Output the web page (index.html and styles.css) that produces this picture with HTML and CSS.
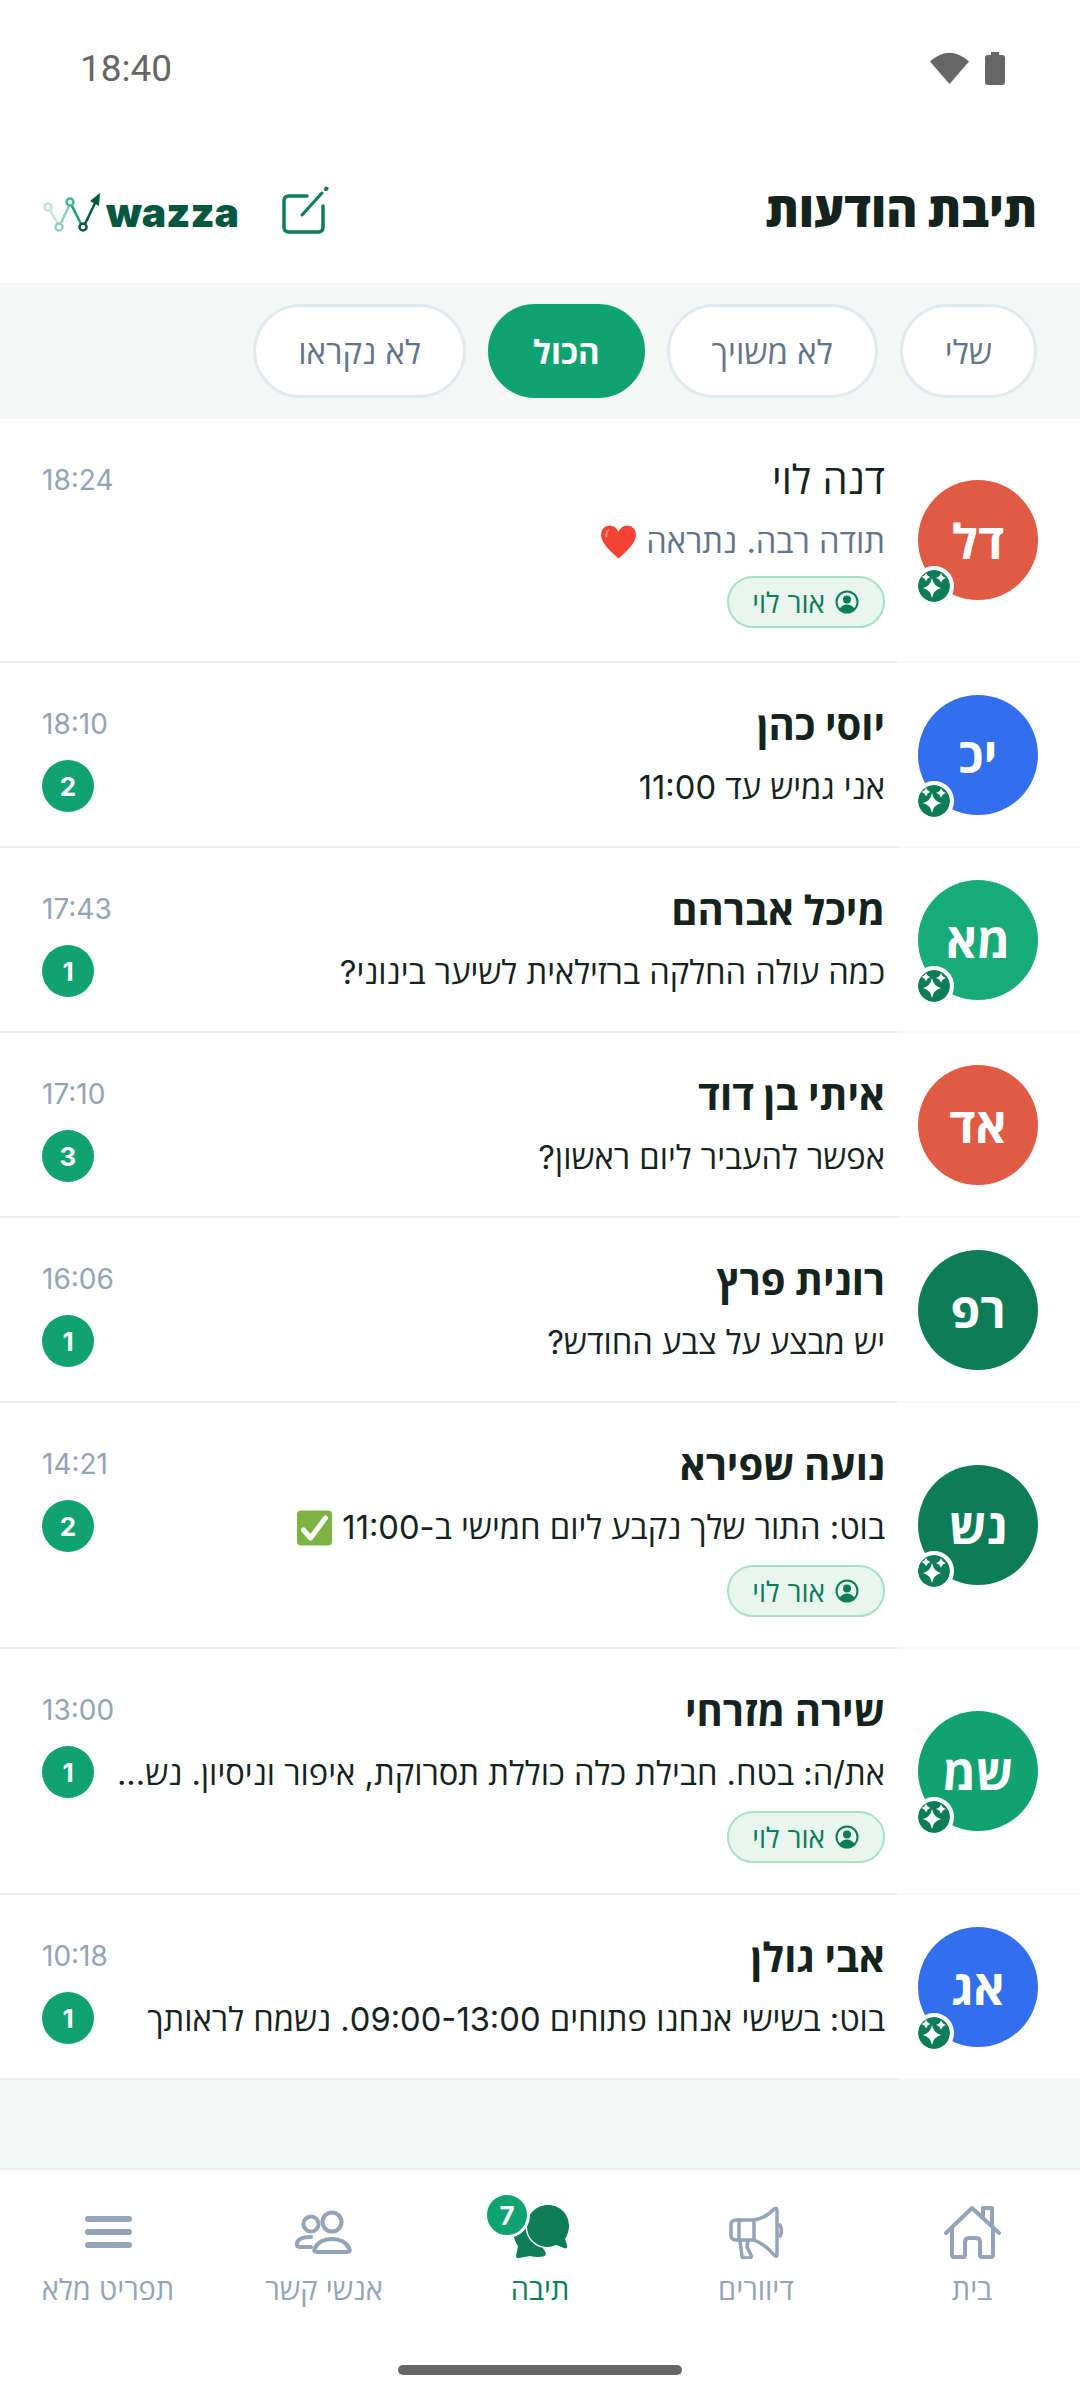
FILE: index.html
```html
<!DOCTYPE html>
<html lang="he" dir="rtl">
<head>
  <meta charset="UTF-8">
  <meta name="viewport" content="width=device-width, initial-scale=1.0">
  <title>תיבת הודעות</title>
  <link rel="stylesheet" href="styles.css">
</head>
<body>
  <svg class="defs" width="0" height="0">
    <symbol id="stars" viewBox="0 0 32 32">
      <circle cx="16" cy="16" r="16" fill="#0d7d58"/>
      <path fill="#fff" d="M14 8 Q15.500 16 23 18 Q15.500 20 14 28 Q12.500 20 5 18 Q12.500 16 14 8Z"/>
      <path fill="#fff" d="M8 2.500 Q9 6 12.500 7 Q9 8 8 11.500 Q7 8 3.500 7 Q7 6 8 2.500Z"/>
      <path fill="#fff" d="M23 3 Q24 7 28 8 Q24 9 23 13 Q22 9 18 8 Q22 7 23 3Z"/>
    </symbol>
    <symbol id="person" viewBox="0 0 24 24">
      <circle cx="12" cy="12" r="10.500" fill="none" stroke="#0d7d58" stroke-width="2"/>
      <circle cx="12" cy="9.500" r="4" fill="#0d7d58"/>
      <path fill="#0d7d58" d="M4.500 19 Q7 14.500 12 14.500 Q17 14.500 19.500 19 Q16 22.500 12 22.500 Q8 22.500 4.500 19Z"/>
    </symbol>
    <symbol id="heart" viewBox="0 0 36 34">
      <path fill="#f44336" d="M18 33 Q2 20 1 11 Q1 2 9 1 Q15 1 18 7 Q21 1 27 1 Q35 2 35 11 Q34 20 18 33Z"/>
      <path fill="#ff8a80" d="M5 12 Q5 6 9 4 Q7 8 7 12 Q6 14 5 12Z"/>
    </symbol>
    <symbol id="check" viewBox="0 0 36 36">
      <rect x="0.500" y="0.500" width="35" height="35" rx="4" fill="#7cb342"/>
      <path d="M7 20 L14 28 L29 8" fill="none" stroke="#fff" stroke-width="5" stroke-linecap="round" stroke-linejoin="round"/>
    </symbol>
  </svg>

  <div class="app">
    <div class="status-bar">
      <span class="clock">18:40</span>
      <div class="status-icons">
        <svg width="39" height="32" viewBox="0 0 39 32"><path fill="#666" d="M0 9.500 Q19.500 -8 39 9.500 L19.500 32Z"/></svg>
        <svg width="20" height="33" viewBox="0 0 20 33"><path fill="#666" d="M6 0 H14 V3 H17 Q20 3 20 6 V30 Q20 33 17 33 H3 Q0 33 0 30 V6 Q0 3 3 3 H6Z"/></svg>
      </div>
    </div>

    <header class="top-bar">
      <h1 class="page-title">תיבת הודעות</h1>
      <div class="top-actions">
        <svg class="edit-icon" width="47" height="48" viewBox="0 0 47 48" fill="none" stroke="#0d7d58" stroke-linecap="round">
          <path stroke-width="3.500" d="M25 10 H7 Q2 10 2 15 V41 Q2 46 7 46 H36 Q41 46 41 41 V20"/>
          <path stroke-width="3" d="M20 29 L40 7"/>
          <path stroke-width="4" d="M44 3 L44.500 2.500"/>
        </svg>
        <div class="logo">
          <svg class="logo-mark" width="60" height="42" viewBox="0 0 60 42" fill="none" stroke-width="2.500">
            <path stroke="#c7e3d8" d="M8 19 L16 33"/>
            <path stroke="#8ed1b8" d="M19 32 L27 15"/>
            <path stroke="#10a371" d="M30 15 L39 33"/>
            <path stroke="#05573f" d="M43 33 L55 8"/>
            <circle cx="6" cy="16" r="3.500" stroke="#c7e3d8"/>
            <circle cx="17" cy="36" r="3.500" stroke="#8ed1b8"/>
            <circle cx="28" cy="11" r="3.500" stroke="#3fb98c"/>
            <circle cx="41" cy="36" r="3.500" stroke="#05573f"/>
            <path fill="#05573f" stroke="none" d="M58 2 L57 15 L48 10Z"/>
          </svg>
          <span class="logo-text">wazza</span>
        </div>
      </div>
    </header>

    <nav class="filters">
      <a class="chip">שלי</a>
      <a class="chip">לא משויך</a>
      <a class="chip chip-active">הכול</a>
      <a class="chip">לא נקראו</a>
    </nav>

    <section class="threads">
      <article class="thread tall read">
        <div class="avatar red">דל<svg class="ai-mark"><use href="#stars"/></svg></div>
        <div class="thread-body">
          <div class="thread-main">
            <div class="name">דנה לוי</div>
            <div class="preview">תודה רבה. נתראה <svg class="emoji"><use href="#heart"/></svg></div>
            <div class="tag"><svg><use href="#person"/></svg>אור לוי</div>
          </div>
          <div class="thread-side"><time>18:24</time></div>
        </div>
      </article>

      <article class="thread">
        <div class="avatar blue">יכ<svg class="ai-mark"><use href="#stars"/></svg></div>
        <div class="thread-body">
          <div class="thread-main">
            <div class="name">יוסי כהן</div>
            <div class="preview">אני גמיש עד 11:00</div>
          </div>
          <div class="thread-side"><time>18:10</time><span class="unread">2</span></div>
        </div>
      </article>

      <article class="thread">
        <div class="avatar mint">מא<svg class="ai-mark"><use href="#stars"/></svg></div>
        <div class="thread-body">
          <div class="thread-main">
            <div class="name">מיכל אברהם</div>
            <div class="preview">כמה עולה החלקה ברזילאית לשיער בינוני?</div>
          </div>
          <div class="thread-side"><time>17:43</time><span class="unread">1</span></div>
        </div>
      </article>

      <article class="thread">
        <div class="avatar red">אד</div>
        <div class="thread-body">
          <div class="thread-main">
            <div class="name">איתי בן דוד</div>
            <div class="preview">אפשר להעביר ליום ראשון?</div>
          </div>
          <div class="thread-side"><time>17:10</time><span class="unread">3</span></div>
        </div>
      </article>

      <article class="thread">
        <div class="avatar dark">רפ</div>
        <div class="thread-body">
          <div class="thread-main">
            <div class="name">רונית פרץ</div>
            <div class="preview">יש מבצע על צבע החודש?</div>
          </div>
          <div class="thread-side"><time>16:06</time><span class="unread">1</span></div>
        </div>
      </article>

      <article class="thread tall">
        <div class="avatar dark">נש<svg class="ai-mark"><use href="#stars"/></svg></div>
        <div class="thread-body">
          <div class="thread-main">
            <div class="name">נועה שפירא</div>
            <div class="preview">בוט: התור שלך נקבע ליום חמישי ב-11:00 <svg class="emoji"><use href="#check"/></svg></div>
            <div class="tag"><svg><use href="#person"/></svg>אור לוי</div>
          </div>
          <div class="thread-side"><time>14:21</time><span class="unread">2</span></div>
        </div>
      </article>

      <article class="thread tall">
        <div class="avatar green">שמ<svg class="ai-mark"><use href="#stars"/></svg></div>
        <div class="thread-body">
          <div class="thread-main">
            <div class="name">שירה מזרחי</div>
            <div class="preview">את/ה: בטח. חבילת כלה כוללת תסרוקת, איפור וניסיון. נש...</div>
            <div class="tag"><svg><use href="#person"/></svg>אור לוי</div>
          </div>
          <div class="thread-side"><time>13:00</time><span class="unread">1</span></div>
        </div>
      </article>

      <article class="thread">
        <div class="avatar blue">אג<svg class="ai-mark"><use href="#stars"/></svg></div>
        <div class="thread-body">
          <div class="thread-main">
            <div class="name">אבי גולן</div>
            <div class="preview">בוט: בשישי אנחנו פתוחים 09:00-13:00. נשמח לראותך</div>
          </div>
          <div class="thread-side"><time>10:18</time><span class="unread">1</span></div>
        </div>
      </article>
    </section>

    <div class="filler"></div>

    <footer class="bottom-nav">
      <div class="nav-tabs">
        <a class="nav-tab">
          <span class="nav-icon">
            <svg width="58" height="54" viewBox="0 0 58 54" fill="none" stroke="#94a3b8" stroke-width="4" stroke-linejoin="round" stroke-linecap="round">
              <path d="M3 28 L29 3 L56 28"/>
              <path d="M9 23 V50 Q9 52 11 52 H20 Q22 52 22 50 V37 Q22 33 26 33 H33 Q37 33 37 37 V50 Q37 52 39 52 H48 Q50 52 50 50 V23"/>
              <path d="M40 11 V3 H49 V20"/>
            </svg>
          </span>
          בית
        </a>
        <a class="nav-tab">
          <span class="nav-icon">
            <svg width="56" height="54" viewBox="0 0 56 54" fill="none" stroke="#94a3b8" stroke-width="3.500" stroke-linejoin="round" stroke-linecap="round">
              <path d="M26 15 Q38 13 46 4 Q49 2 49 6 V49 Q49 53 46 50 Q38 40 26 35 H8 Q3 35 3 30 V20 Q3 15 8 15 Z"/>
              <path d="M11 15 V35"/>
              <path d="M26 15 V35"/>
              <path d="M12 36 L14 51 Q14 53 16 53 H21 Q24 53 23 50 L19 42 L20 36"/>
              <path d="M52 20 Q55 26 52 31"/>
            </svg>
          </span>
          דיוורים
        </a>
        <a class="nav-tab nav-tab-active">
          <span class="nav-icon">
            <svg width="60" height="56" viewBox="0 0 60 56">
              <path fill="#0d7d58" d="M3 30 Q5 38 8 42 L6 52 Q6 55 9 54 L20 52 Q28 54 35 52 Q37 49 34 46 L20 20Z"/>
              <path fill="#0d7d58" stroke="#fff" stroke-width="3" paint-order="stroke" d="M38 1 C50 1 59 10 59 22 C59 27 57 32 55 35 L57 41 C58 44 56 45 54 44 L46 41 C43 42 41 43 38 43 C26 43 17 34 17 22 C17 10 26 1 38 1Z"/>
            </svg>
            <span class="nav-count">7</span>
          </span>
          תיבה
        </a>
        <a class="nav-tab">
          <span class="nav-icon">
            <svg width="60" height="44" viewBox="0 0 60 44" fill="none" stroke="#94a3b8" stroke-width="4" stroke-linejoin="round" stroke-linecap="round">
              <circle cx="17" cy="14" r="7.500"/>
              <circle cx="38" cy="12" r="9.500"/>
              <path d="M17 37 H6 Q2 37 3 33 C4 29 10 27 17 27"/>
              <path d="M23 42 Q19 42 21 38 C24 32 30 29 38 29 C46 29 52 32 55 38 Q57 42 53 42 Z"/>
            </svg>
          </span>
          אנשי קשר
        </a>
        <a class="nav-tab">
          <span class="nav-icon">
            <span class="burger"><i></i><i></i><i></i></span>
          </span>
          תפריט מלא
        </a>
      </div>
      <div class="home-indicator"></div>
    </footer>
  </div>
</body>
</html>
```

FILE: styles.css
```css
* {
  margin: 0;
  padding: 0;
  box-sizing: border-box;
}

body {
  width: 1080px;
  height: 2400px;
  overflow: hidden;
  background: #fff;
  font-family: Inter, "Open Sans", sans-serif;
  color: #14231e;
}

.defs {
  display: block;
  height: 0;
}

.app {
  height: 2400px;
  display: flex;
  flex-direction: column;
}

.status-bar {
  direction: ltr;
  height: 136px;
  padding: 0 75px 0 80px;
  display: flex;
  justify-content: space-between;
  align-items: center;
}

.clock {
  font-family: Roboto, sans-serif;
  font-size: 37px;
  color: #666;
}

.status-icons {
  display: flex;
  align-items: center;
  gap: 16px;
}

.top-bar {
  height: 147px;
  padding: 0 43px 0 42px;
  display: flex;
  justify-content: space-between;
  align-items: center;
}

.page-title {
  margin-top: -3px;
  font-size: 47.5px;
  font-weight: 800;
  color: #14231e;
}

.top-actions {
  display: flex;
  align-items: center;
  gap: 45px;
}

.edit-icon {
  display: block;
}

.logo {
  direction: ltr;
  width: 195px;
  margin-top: 5px;
  display: flex;
  align-items: center;
  gap: 4px;
}

.logo-mark {
  flex: none;
}

.logo-text {
  font-family: Inter, sans-serif;
  font-size: 41px;
  font-weight: 900;
  color: #05573f;
  line-height: 42px;
}

.filters {
  height: 136px;
  padding: 21px 43px;
  background: #f5f7f6;
  display: flex;
  gap: 22px;
}

.chip {
  height: 94px;
  padding: 0 42px;
  border: 3px solid #e4e8ef;
  border-radius: 47px;
  background: #fff;
  color: #64748b;
  font-size: 33px;
  display: flex;
  align-items: center;
}

.chip-active {
  background: #10a371;
  border-color: #10a371;
  color: #fff;
  font-weight: 700;
}

.threads {
  display: flex;
  flex-direction: column;
}

.thread {
  display: flex;
  padding-right: 42px;
  border-bottom: 2px solid #f6f7f7;
  background: #fff;
}

.avatar {
  position: relative;
  flex: none;
  align-self: center;
  width: 120px;
  height: 120px;
  margin-left: 20px;
  border-radius: 50%;
  color: #fff;
  font-size: 48px;
  font-weight: 700;
  display: flex;
  align-items: center;
  justify-content: center;
}

.red { background: #e05a44; }
.blue { background: #316fec; }
.mint { background: #18ab7a; }
.green { background: #10a371; }
.dark { background: #0d7d58; }

.ai-mark {
  position: absolute;
  left: -4px;
  bottom: -6px;
  width: 40px;
  height: 40px;
  border: 4px solid #fff;
  border-radius: 50%;
  background: #fff;
}

.thread-body {
  flex: 1;
  min-width: 0;
  margin-bottom: -2px;
  padding: 0 13px 0 42px;
  border-bottom: 2px solid #eceeee;
  display: flex;
}

.thread-main {
  flex: 1;
  min-width: 0;
  padding-top: 39px;
  padding-bottom: 37px;
  display: flex;
  flex-direction: column;
  align-items: flex-start;
}

.thread:first-child .thread-main {
  padding-top: 37px;
  padding-bottom: 36.7px;
}

.name {
  font-size: 40px;
  font-weight: 700;
  line-height: 48px;
}

.preview {
  width: 100%;
  margin-top: 15px;
  font-size: 32.7px;
  line-height: 44px;
  white-space: nowrap;
}

.read .name {
  font-weight: 400;
}

.read .preview {
  color: #64748b;
}

.emoji {
  width: 37px;
  height: 36px;
  vertical-align: -7px;
}

.tag {
  height: 52px;
  margin-top: 16px;
  margin-bottom: -7px;
  padding: 0 24px 0 23px;
  border: 2px solid #a9e0c9;
  border-radius: 26px;
  background: #e9f6f0;
  color: #0d7d58;
  font-size: 28px;
  display: flex;
  align-items: center;
  gap: 10px;
}

.thread:first-child .tag {
  margin-top: 13px;
  margin-bottom: -3.7px;
}

.tag svg {
  width: 24px;
  height: 24px;
}

.thread-side {
  flex: none;
  width: 72px;
  padding-top: 45px;
  display: flex;
  flex-direction: column;
  align-items: flex-start;
  direction: ltr;
  gap: 20px;
}

.thread-side time {
  font-size: 28px;
  line-height: 32px;
  color: #94a3b8;
}

.unread {
  width: 52px;
  height: 52px;
  border-radius: 50%;
  background: #10a371;
  color: #fff;
  font-size: 26px;
  font-weight: 700;
  display: flex;
  align-items: center;
  justify-content: center;
}

.filler {
  flex: 1;
  background: #f5f7f6;
}

.bottom-nav {
  height: 232px;
  border-top: 2px solid #eceeee;
  background: #fff;
}

.nav-tabs {
  display: grid;
  grid-template-columns: repeat(5, 216px);
  padding-top: 34px;
}

.nav-tab {
  font-size: 29px;
  color: #94a3b8;
  display: flex;
  flex-direction: column;
  align-items: center;
  gap: 9px;
}

.nav-tab-active {
  color: #0d7d58;
}

.nav-icon {
  position: relative;
  height: 56px;
  display: flex;
  align-items: center;
  justify-content: center;
}

.nav-count {
  position: absolute;
  left: -26px;
  top: -12px;
  width: 46px;
  height: 46px;
  border: 3px solid #fff;
  border-radius: 50%;
  background: #10a371;
  color: #fff;
  font-size: 26px;
  font-weight: 700;
  display: flex;
  align-items: center;
  justify-content: center;
}

.burger {
  width: 47px;
  display: flex;
  flex-direction: column;
  gap: 7px;
}

.burger i {
  height: 6px;
  border-radius: 3px;
  background: #94a3b8;
}

.home-indicator {
  width: 284px;
  height: 10px;
  margin: 57px auto 0;
  border-radius: 5px;
  background: #666;
}
```
